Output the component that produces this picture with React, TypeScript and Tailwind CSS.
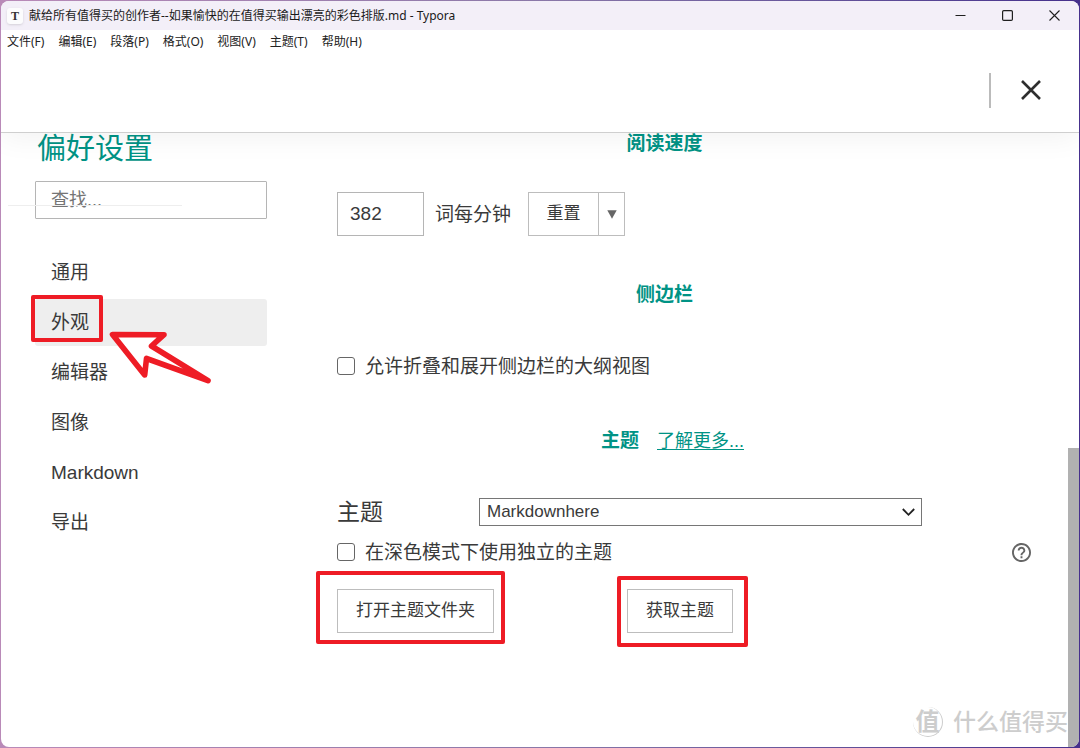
import { useState, ReactNode } from "react";

const menus = ["文件(F)", "编辑(E)", "段落(P)", "格式(O)", "视图(V)", "主题(T)", "帮助(H)"];

const tabs = ["通用", "外观", "编辑器", "图像", "Markdown", "导出"];

const themes = ["Markdownhere", "Github", "Newsprint", "Night", "Pixyll", "Whitey"];

const TitleBar = () => (
  <div className="flex h-[29px] items-center justify-between bg-[#f3eff8] pl-[6px] pr-[19px] font-['Noto_Sans','Noto_Sans_CJK_SC',sans-serif]">
    <div className="flex items-center gap-[6px]">
      <span className="flex size-4 items-center justify-center rounded-[3px] bg-[#fcfcfd] font-['Liberation_Serif',serif] text-xs font-bold text-[#333] shadow-sm">
        T
      </span>
      <h1 className="text-xs text-[#1a1a1a]">
        献给所有值得买的创作者--如果愉快的在值得买输出漂亮的彩色排版.md - Typora
      </h1>
    </div>
    <div className="flex items-center gap-9 text-[#1f1f1f]">
      <button aria-label="最小化">
        <svg width="11" height="11" viewBox="0 0 11 11" fill="none" stroke="currentColor">
          <path d="M0.5 5.5H10.5" />
        </svg>
      </button>
      <button aria-label="最大化">
        <svg width="11" height="11" viewBox="0 0 11 11" fill="none" stroke="currentColor">
          <rect x="0.6" y="0.6" width="9.8" height="9.8" rx="1.2" strokeWidth="1.2" />
        </svg>
      </button>
      <button aria-label="关闭">
        <svg width="11" height="11" viewBox="0 0 11 11" fill="none" stroke="currentColor">
          <path d="M0.5 0.5L10.5 10.5M10.5 0.5L0.5 10.5" strokeWidth="1.1" />
        </svg>
      </button>
    </div>
  </div>
);

const MenuBar = () => (
  <nav className="relative z-20 flex h-6 items-center gap-[14px] bg-white pl-[6px] font-['Noto_Sans','Noto_Sans_CJK_SC',sans-serif] text-xs text-[#222]">
    {menus.map((menu) => (
      <button key={menu}>{menu}</button>
    ))}
  </nav>
);

const RedFrame = ({ className }: { className: string }) => (
  <span
    className={`pointer-events-none absolute rounded-[2px] border-4 border-[#ee1c25] ${className}`}
  />
);

const Arrow = () => (
  <svg
    className="pointer-events-none absolute left-[73px] top-[31px] z-10"
    width="104"
    height="56"
    viewBox="0 0 104 56"
    fill="white"
    stroke="#ee1c25"
    strokeWidth="5.6"
    strokeLinejoin="round"
  >
    <path d="M4.5 4.5L56 4.7L43.5 16L100 50.7L38.5 28.5L36.7 45Z" />
  </svg>
);

const Sidebar = () => {
  const [active, setActive] = useState("外观");

  return (
    <aside className="relative w-[232px] shrink-0">
      <h2 className="h-8 whitespace-nowrap pl-[2px] text-[29px] leading-8 text-[#009385]">
        偏好设置
      </h2>
      <input
        type="search"
        aria-label="查找"
        placeholder="查找..."
        className="mt-4 h-[38px] w-full rounded-[1px] border border-[#b5b5b5] bg-white px-[15px] text-lg text-[#333] outline-none placeholder:text-[#757575]"
      />
      <div className="absolute -left-[27px] top-[72px] h-px w-[174px] bg-[#eeeeee]" />
      <nav className="mt-[30px] flex flex-col gap-[3px]">
        {tabs.map((tab) => (
          <div key={tab} className="relative">
            <button
              onClick={() => setActive(tab)}
              className={`h-[47px] w-full rounded-[3px] px-4 pt-[2px] text-left text-[19px] text-[#3a3a3a] ${
                active === tab ? "bg-[#eeeeee]" : ""
              }`}
            >
              {tab}
            </button>
            {tab === "外观" && (
              <>
                <RedFrame className="-left-1 -top-1 h-[47px] w-[72px]" />
                <Arrow />
              </>
            )}
          </div>
        ))}
      </nav>
    </aside>
  );
};

const SectionTitle = ({ children }: { children: ReactNode }) => (
  <div className="flex h-5 items-center justify-center gap-[18px] pr-[39px] pt-[2px] leading-5 text-[#009385]">
    {children}
  </div>
);

const Check = ({ id, label }: { id: string; label: string }) => (
  <div className="flex h-6 items-center gap-[10px]">
    <input
      id={id}
      type="checkbox"
      className="size-[18px] shrink-0 appearance-none rounded-[3px] border border-[#666] bg-white checked:bg-[#009385]"
    />
    <label htmlFor={id} className="pt-[2px]">
      {label}
    </label>
  </div>
);

const outlined = "border border-[#bdbdbd] bg-white text-[17px] text-[#3a3a3a]";

const Settings = () => {
  const [speed, setSpeed] = useState("382");

  return (
    <main className="ml-[70px] min-w-0 flex-1 pr-[37px] text-[19px] text-[#3a3a3a]">
      <SectionTitle>
        <h3 className="font-bold">阅读速度</h3>
      </SectionTitle>
      <div className="mt-[39px] flex h-11 items-center">
        <input
          id="speed"
          value={speed}
          onChange={(e) => setSpeed(e.target.value)}
          className="h-11 w-[87px] border border-[#b5b5b5] bg-white px-3 outline-none"
        />
        <label htmlFor="speed" className="ml-[11px] pt-[2px]">
          词每分钟
        </label>
        <button className={`ml-[17px] h-11 w-[71px] ${outlined}`} onClick={() => setSpeed("382")}>
          重置
        </button>
        <button
          aria-label="更多"
          className="flex h-11 w-[26px] items-center justify-center border-y border-r border-[#bdbdbd] bg-white"
        >
          <svg width="10" height="9" viewBox="0 0 10 9" fill="#666">
            <path d="M0.3 0.3H9.7L5 8.8Z" />
          </svg>
        </button>
      </div>

      <div className="mt-12">
        <SectionTitle>
          <h3 className="font-bold">侧边栏</h3>
        </SectionTitle>
      </div>
      <div className="mt-[50px]">
        <Check id="outline" label="允许折叠和展开侧边栏的大纲视图" />
      </div>

      <div className="mt-[52px] pl-4">
        <SectionTitle>
          <h3 className="font-bold">主题</h3>
          <a href="#themes" className="text-lg leading-5 underline underline-offset-2">
            了解更多...
          </a>
        </SectionTitle>
      </div>
      <div className="mt-12 flex h-7 items-center">
        <label htmlFor="theme" className="w-[142px] shrink-0 text-[23px]">
          主题
        </label>
        <div className="relative w-[443px]">
          <select
            id="theme"
            className="block h-7 w-full appearance-none border border-[#767676] bg-white pl-[7px] pr-8 text-[17px] leading-6 outline-none"
          >
            {themes.map((theme) => (
              <option key={theme}>{theme}</option>
            ))}
          </select>
          <svg
            className="pointer-events-none absolute right-[7px] top-[10px]"
            width="13"
            height="9"
            viewBox="0 0 13 9"
            fill="none"
            stroke="#222"
            strokeWidth="1.8"
          >
            <path d="M0.8 1L6.5 6.8L12.2 1" />
          </svg>
        </div>
      </div>
      <div className="mt-[14px] flex items-center justify-between">
        <Check id="dark" label="在深色模式下使用独立的主题" />
        <button aria-label="帮助">
          <svg width="19" height="19" viewBox="2 2 20 20" fill="#666">
            <path d="M11 18h2v-2h-2v2zm1-16C6.48 2 2 6.48 2 12s4.48 10 10 10 10-4.48 10-10S17.52 2 12 2zm0 18c-4.41 0-8-3.59-8-8s3.59-8 8-8 8 3.59 8 8-3.59 8-8 8zm0-14c-2.21 0-4 1.79-4 4h2c0-1.1.9-2 2-2s2 .9 2 2c0 2-3 1.75-3 5h2c0-2.25 3-2.5 3-5 0-2.21-1.79-4-4-4z" />
          </svg>
        </button>
      </div>
      <div className="mt-[25px] flex gap-[133px]">
        <div className="relative">
          <button className={`h-11 w-[157px] ${outlined}`}>打开主题文件夹</button>
          <RedFrame className="-bottom-[11px] -left-[21px] -right-[11px] -top-[18px]" />
        </div>
        <div className="relative">
          <button className={`h-11 w-[106px] ${outlined}`}>获取主题</button>
          <RedFrame className="-bottom-[14px] -left-[10px] -right-[15px] -top-[13px]" />
        </div>
      </div>
    </main>
  );
};

const Watermark = () => (
  <div className="pointer-events-none absolute bottom-[9px] right-[11px] z-20 flex items-center gap-[10px] text-[#cdcdcd]">
    <span className="flex size-[30px] items-center justify-center rounded-full border-b border-r border-[#cdcdcd] text-2xl font-bold leading-8">
      值
    </span>
    <span className="text-[23px] font-medium leading-8">什么值得买</span>
  </div>
);

export default function App() {
  return (
    <div className="flex min-h-screen flex-col bg-linear-to-r from-[#b98ab8] via-[#8a78a8] to-[#46308c] p-px font-['Liberation_Sans','Noto_Sans_CJK_SC',sans-serif]">
      <div className="relative flex flex-1 flex-col overflow-hidden rounded-lg bg-white">
        <TitleBar />
        <MenuBar />
        <header className="relative z-10 flex h-[79px] items-center justify-end gap-[30px] border-b border-[#cfcfcf] bg-white pb-[6px] pr-[38px] shadow-[0_4px_30px_rgba(0,0,0,0.06)]">
          <div className="h-[35px] w-[2px] bg-[#bbbbbb]" />
          <button aria-label="关闭偏好设置">
            <svg width="20" height="20" viewBox="0 0 20 20" fill="none" stroke="#2e2e2e">
              <path d="M1 1L19 19M19 1L1 19" strokeWidth="2.6" />
            </svg>
          </button>
        </header>
        <div className="flex flex-1 pl-[34px]">
          <Sidebar />
          <Settings />
          <div className="flex w-[11px] shrink-0 flex-col">
            <div className="flex-[20]" />
            <div className="flex-[19] bg-[#b1b1b1]" />
          </div>
        </div>
        <Watermark />
      </div>
    </div>
  );
}
